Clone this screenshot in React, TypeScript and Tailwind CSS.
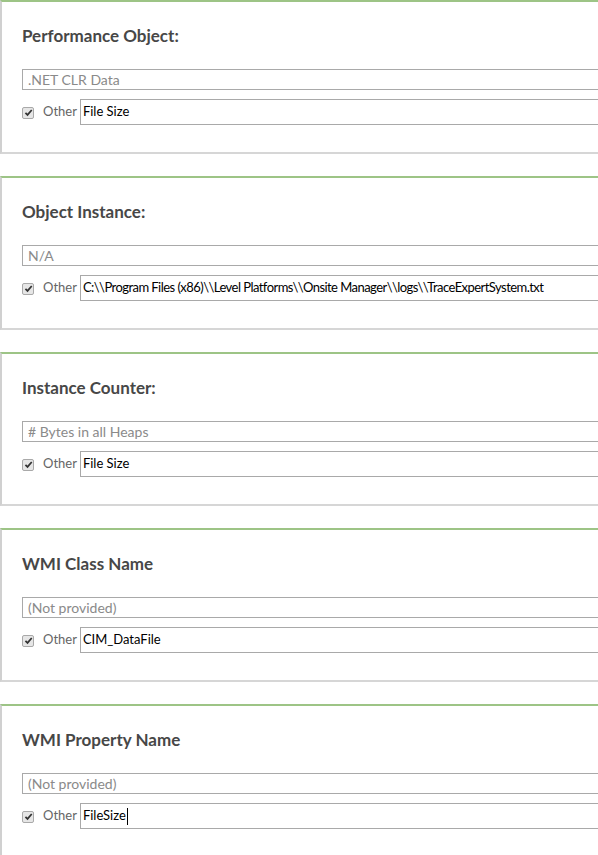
import React from 'react';

type Field = {
  title: string;
  placeholder: string;
  value: string;
  caret?: boolean;
  tight?: boolean;
};

const fields: Field[] = [
  { title: 'Performance Object:', placeholder: '.NET CLR Data', value: 'File Size' },
  {
    title: 'Object Instance:',
    placeholder: 'N/A',
    value: 'C:\\\\Program Files (x86)\\\\Level Platforms\\\\Onsite Manager\\\\logs\\\\TraceExpertSystem.txt',
    tight: true,
  },
  { title: 'Instance Counter:', placeholder: '# Bytes in all Heaps', value: 'File Size' },
  { title: 'WMI Class Name', placeholder: '(Not provided)', value: 'CIM_DataFile' },
  { title: 'WMI Property Name', placeholder: '(Not provided)', value: 'FileSize', caret: true },
];

function CheckBox() {
  return (
    <span className="flex h-[12px] w-[12px] items-center justify-center rounded-[2px] border border-[#a9a9a9] bg-[#e6e6e6]">
      <svg viewBox="0 0 10 10" className="h-[9px] w-[9px]">
        <path d="M1.6 5.4 L3.9 7.7 L8.6 2.2" fill="none" stroke="#333" strokeWidth="1.9" />
      </svg>
    </span>
  );
}

function Panel({ field }: { field: Field }) {
  return (
    <div className="h-[154px] w-[640px] shrink-0 border-t-2 border-b-2 border-l-2 border-t-[#9dc486] border-b-[#d6d6d6] border-l-[#d0d0d0] bg-white pl-[20px]">
      <div className="pt-[22px] text-[17px] font-bold leading-[24px] text-[#474747]">{field.title}</div>
      <div className="mt-[21px] flex h-[21px] items-center border border-[#a9a9a9] pl-[5px] text-[14px] text-[#8a8a8a]">
        {field.placeholder}
      </div>
      <div className="mt-[9px] flex items-center">
        <span className="mr-[9px] mt-[1px]">
          <CheckBox />
        </span>
        <span className="mr-[3px] text-[13px] text-[#666]">Other</span>
        <div
          className={
            field.tight
              ? 'flex h-[26px] flex-1 items-center whitespace-nowrap border border-[#a9a9a9] pl-[2px] text-[13px] tracking-[-0.55px] text-black'
              : 'flex h-[26px] flex-1 items-center whitespace-nowrap border border-[#a9a9a9] pl-[2px] text-[13px] text-black'
          }
        >
          {field.value}
          {field.caret && <span className="ml-[1px] inline-block h-[17px] w-[1px] bg-black" />}
        </div>
      </div>
    </div>
  );
}

export default function App() {
  return (
    <div
      className="flex h-[855px] w-[598px] flex-col gap-[22px] overflow-hidden bg-white"
      style={{ fontFamily: 'Lato, "Open Sans", sans-serif' }}
    >
      {fields.map((f) => (
        <Panel key={f.title} field={f} />
      ))}
    </div>
  );
}
